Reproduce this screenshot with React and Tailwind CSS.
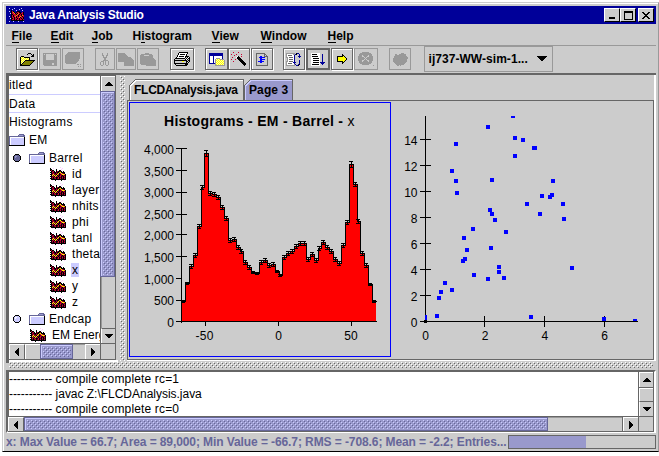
import React from 'react';
import clsx from 'clsx';

const PALETTE = {
  K: '#000000',
  W: '#ffffff',
  G: '#999999',
  L: '#cccccc',
  D: '#666666',
  Y: '#ffff00',
  y: '#ffffaa',
  O: '#808000',
  B: '#0000ff',
  N: '#000099',
  R: '#cc0033',
  M: '#660022',
  P: '#ffccff',
  V: '#ccccff',
  S: '#666699',
  C: '#9999cc',
  o: '#ff9900',
};

// Small bitmap icons, one character per pixel
const ICONS = {
  histogram: [
    '..........P.....',
    'K..P........P...',
    'KK....K....P....',
    'KRKK..K..KK.....',
    '.KMRK.KRKKMK.K..',
    'KKRMKKMKKoYKKKK.',
    '.KMRMKRMYKRYRMK.',
    'KKRYMRKYRKMRYYoK',
    '.KYMYMYKMKRMKRMK',
    'KKMRKYMRKMRKMKRK',
    '.KRKRMKKRKMKRKMK',
    'KKMKMRKMRKRKMKRK',
    '.KKKKKKKKKKKKKKK',
    '..P..K..P..K..P.',
  ],
  app: [
    'V....V......V...',
    '...V......V.....',
    '..K....V.....V..',
    'V.KRK...KKK.....',
    '..KRoK.KRRKK.RK.',
    '.VKRRoKRKoRKRRK.',
    '..KKRRRKoRKRKRK.',
    '..KRKRRoRKRRKoR.',
    'V.KRKRoKRKRoRKR.',
    '..KRRKRKRRoKRRK.',
    '.VKKRKRRKRKRKRK.',
    '..KRRKRKRRKRRKR.',
    '..KKKKKKKKKKKKK.',
    'V...V....V....V.',
  ],
  folder: [
    '..........SSSSS.',
    '.........SCCCCSS',
    'SSSSSSSSSSSSSSSS',
    'SWWWWWWWWWWWWWWK',
    'SWVVVVVVVVVVVVVK',
    'SWVVVVVVVVVVVVVK',
    'SWVVVVVVVVVVVVVK',
    'SWVVVVVVVVVVVVVK',
    'SWVVVVVVVVVVVVVK',
    'SWVVVVVVVVVVVVVK',
    'SWVVVVVVVVVVVVVK',
    'KKKKKKKKKKKKKKKK',
  ],
  knobOpen: [
    '..KKKK..',
    '.KSSSSK.',
    'KSCCSSSK',
    'KSCSSSSK',
    'KSSSSSSK',
    'KSSSSSSK',
    '.KSSSSK.',
    '..KKKK..',
  ],
  knobClosed: [
    '..KKKK..',
    '.KVVVVK.',
    'KVWWVVVK',
    'KVWVVVVK',
    'KVVVVVVK',
    'KVVVVVVK',
    '.KVVVVK.',
    '..KKKK..',
  ],
  open: [
    '.........KKK....',
    '........K...K.K.',
    '.............KK.',
    '..KKK.......KKK.',
    '.KyYyKKKKKK.....',
    '.KYyYyYyYyK.....',
    '.KyYyYyYyYK.....',
    '.KYyYyKKKKKKKKKK',
    '.KyYyKOOOOOOOOK.',
    '.KYyKOOOOOOOOK..',
    '.KyKOOOOOOOOK...',
    '.KKOOOOOOOOK....',
    '.KKKKKKKKKK.....',
  ],
  save: [
    'GGGGGGGGGGGGGG',
    'GLGLLLLLLLLGLG',
    'GGGLLLLLLLLGGG',
    'GGGLLLLLLLLGGG',
    'GGGLLLLLLLLGGG',
    'GGGLLLLLLLLGGG',
    'GGGLLLLLLLLGGG',
    'GGGGGGGGGGGGGG',
    'GGGGGGGGGGGGGG',
    'GGGGGGGGGGGGGG',
    'GGGGGGGGGLLGGG',
    'GGGGGGGGGLLGGG',
    '.GGGGGGGGGGGGG',
  ],
  saveAll: [
    '...GGGGGGGGGGGG.',
    '..GGGGGGGGGGGGG.',
    '.GGGGGGGGGGGGGG.',
    'GGGGGGGGGGGGGGG.',
    'GGGGGGGGGGGGGGG.',
    'GGGGGGGGGGGGGGG.',
    'GGGGGGGGGGGGGGG.',
    'GGGGGGGGGGGGGG..',
    'GGGGGGGGGGGGGG..',
    'GGGGGGGGGGGGG...',
    'GGGGGGGGGGGG....',
    '.GGGGGGGGGG.....',
    '............GG.G',
    '................',
    '.............G.G',
  ],
  cut: [
    '..G....G..',
    '..G....G..',
    '..GG..GG..',
    '...G..G...',
    '...GGGG...',
    '....GG....',
    '....GG....',
    '...GGGGG..',
    '.GGG.G..G.',
    'G..G.G..G.',
    'G..G.G..G.',
    'G..G.G..G.',
    '.GG...GG..',
  ],
  copy: [
    'GGGGGGG.........',
    'GGGGGGGG........',
    'GGGGGGGGG.......',
    'GGGGGGGGGG......',
    'GGGGGGGGGGGGG...',
    'GGGGGGGGGGGGGG..',
    'GGGGGGGGGGGGGGG.',
    'GGGGGGGGGGGGGGGG',
    'GGGGGGGGGGGGGGGG',
    '......GGGGGGGGGG',
    '......GGGGGGGGGG',
    '......GGGGGGGGGG',
    '......GGGGGGGGGG',
  ],
  paste: [
    '.....GGGG.......',
    '.GGGGGGGGGGG....',
    'GGGGLLLLLGGGG...',
    'GGGGGGGGGGGGG...',
    'GGGGGGGGGGGGG...',
    'GGGGGGGGGGGGGG..',
    'GGGGGGGGGGGGGGG.',
    'GGGGGGGGGGGGGGGG',
    'GGGGGGGGGGGGGGGG',
    'GGGGGGGGGGGGGGGG',
    'GGGGGGGGGGGGGGGG',
    '.GGGGGGGGGGGGGGG',
    '......GGGGGGGGGG',
  ],
  print: [
    '.....KKKKKKKKK..',
    '....KWWWWWWWWK..',
    '....KWKKKKKWK...',
    '...KWWWWWWWWK...',
    '...KWKKKKKWKKKK.',
    '..KWWWWWWWWK.KWK',
    '.KKKKKKKKKK.KWKK',
    'KLLLLLLLLLLKWKLK',
    'KKKKKKKKKKKKKLKK',
    'KLLLLLLLYYLLKKLK',
    'KLLLLLLLLLLLKLK.',
    'KKKKKKKKKKKKKK..',
    '.KLLLLLLLLLKKK..',
    '..KKKKKKKKKKK...',
  ],
  page: [
    'NNNNNNNNNNNNNN..',
    'NNNNNNNNNNNNNN..',
    'NNNNNNNNNNNNNN..',
    'NWWWNWWWWWWWWN..',
    'NWWWNWWWWWWWWN..',
    'NWWWNWWGGGGWWN..',
    'NWWWNWGyYyYGGGG.',
    'NWWWNWGYyYyYyYyG',
    'NWWWNWGyYyYyYyYG',
    'NWWWNWGYyYyYyYyG',
    'NNNNNNGyYyYyYyYG',
    '......GYyYyYyYyG',
    '......GGGGGGGGGG',
  ],
  wand: [
    '..R....R........',
    '................',
    'R....R....R.....',
    '...R............',
    '......WK..R.....',
    '.R...WKKK.......',
    '......KKKK......',
    'R...R..KKKK.....',
    '........KKKK....',
    '..R......KKKK...',
    '..........KKKK..',
    '...........KKKK.',
    '............KKK.',
    '.............K..',
  ],
  doc: [
    'DDDDDDDDD...',
    'DLLLLLLLDD..',
    'DLLLLLLLDLD.',
    'DLLLBBLLDDDD',
    'DLLBBBBBBLLD',
    'DLLLBBLLLLLD',
    'DLLLBBBBBLLD',
    'DLLLBBLLLLLD',
    'DLBBBBBBLLLD',
    'DLLLBBLLLLLD',
    'DLLLLLLLLLLD',
    'DLLLLLLLLLLD',
    'DDDDDDDDDDDD',
  ],
  reload: [
    'GGGGGGGGG.KNN...',
    'GWWWWWWGGNK..N..',
    'GWDDDDWWN....N..',
    'GWWWWWWWN...NNN.',
    'GGWDDDDWN....N..',
    '.GWWWWWWN.......',
    '.GWDDDDWN.......',
    '.GWWWWWWN....N..',
    'GGWDDDDWN....N..',
    'GWWWWWWNNN...N..',
    'GWDDDDWWN....N..',
    'GWWWWWWWGN..NK..',
    'GGGGGGGGG.NNK...',
  ],
  run: [
    'WWWWWWWWW.....',
    'WKKKKKWWW..N..',
    'WWWWWWWWW..N..',
    'WKKKKKKWW..N..',
    'WWWWWWWWW..N..',
    'WWKKKKKKW..N..',
    'WWWWWWWWW..N..',
    'WWKKKKKKW..N..',
    'WWWWWWWWW..N..',
    'WWKKKKKKWNNNNN',
    'WWWWWWWWW.NNN.',
    'WKKKKKKKW..N..',
    'WWWWWWWWW.....',
  ],
  step: [
    '.....K....',
    '.....KK...',
    'KKKKKKYK..',
    'KYYYYYYYK.',
    'KYYYYYYYYK',
    'KYYYYYYYYK',
    'KYYYYYYYK.',
    'KKKKKKYK..',
    '.....KK...',
    '.....K....',
  ],
  stop: [
    '....GGGGGGG.....',
    '..GGGGGGGGGGG...',
    '.GGGGGGGGGGGGG..',
    '.GGGLGGGGGLGGG..',
    'GGGGLLGGGLLGGGG.',
    'GGGGGGLGLGGGGGG.',
    'GGGGGGGLGGGGGGG.',
    'GGGGGGLGLGGGGGG.',
    'GGGGLLGGGLLGGGG.',
    '.GGGLGGGGGLGGG..',
    '.GGGGGGGGGGGGG..',
    '..GGGGGGGGGGG...',
    '....GGGGGGG.....',
    '...............G',
  ],
  blob: [
    '........GGG....',
    '..GG..GGGGGGG..',
    '..GGGGGGGGGGG..',
    '.GGGGGGGGGGGGG.',
    '.GGGGGGGGGGGGGG',
    'GGGGGGGGGGGGGGG',
    'GGGGGGGGGGGGGG.',
    'GGGGGGGGGGGGGG.',
    'GGGGGGGGGGGGGG.',
    '.GGGGGGGGGGGG..',
    '..GGGGGGGGGG...',
    '...GGGGGGGG....',
    '....GG.G.......',
  ],
  up: ['...KK...', '..KKKK..', '.KKKKKK.', 'KKKKKKKK'],
  down: ['KKKKKKKK', '.KKKKKK.', '..KKKK..', '...KK...'],
  left: ['...K', '..KK', '.KKK', 'KKKK', 'KKKK', '.KKK', '..KK', '...K'],
  right: ['K...', 'KK..', 'KKK.', 'KKKK', 'KKKK', 'KKK.', 'KK..', 'K...'],
  combo: ['KKKKKKKKKK', '.KKKKKKKK.', '..KKKKKK..', '...KKKK...', '....KK....'],
  minimize: ['KKKKKK', 'KKKKKK'],
  maximize: [
    'KKKKKKKKK',
    'KKKKKKKKK',
    'K.......K',
    'K.......K',
    'K.......K',
    'K.......K',
    'K.......K',
    'K.......K',
    'KKKKKKKKK',
  ],
  close: ['KK....KK', '.KK..KK.', '..KKKK..', '...KK...', '..KKKK..', '.KK..KK.', 'KK....KK'],
};

const PixelIcon = ({ name, className }) => {
  const rows = ICONS[name];
  return (
    <svg
      width={rows[0].length}
      height={rows.length}
      shapeRendering="crispEdges"
      className={clsx('shrink-0', className)}
    >
      {rows.map((row, y) =>
        [...row].map((c, x) =>
          PALETTE[c] ? <rect key={`${x}-${y}`} x={x} y={y} width="1" height="1" fill={PALETTE[c]} /> : null
        )
      )}
    </svg>
  );
};

/* Metal look "bumps" texture */
const Bumps = ({ id, light = '#ffffff', dark = '#666666' }) => (
  <svg width="100%" height="100%" shapeRendering="crispEdges" className="block">
    <pattern id={id} width="4" height="4" patternUnits="userSpaceOnUse">
      <rect x="0" y="0" width="1" height="1" fill={light} />
      <rect x="1" y="1" width="1" height="1" fill={dark} />
      <rect x="2" y="2" width="1" height="1" fill={light} />
      <rect x="3" y="3" width="1" height="1" fill={dark} />
    </pattern>
    <rect width="100%" height="100%" fill={`url(#${id})`} />
  </svg>
);

const Thumb = ({ id, className }) => (
  <div className={clsx('bg-[#9999cc] border border-[#666699] shrink-0', className)}>
    <div className="h-full border-l border-t border-[#ccccff] p-px">
      <Bumps id={id} light="#ccccff" dark="#666699" />
    </div>
  </div>
);

const ArrowButton = ({ name, className }) => (
  <div
    className={clsx(
      'flex items-center justify-center shrink-0 bg-[#cccccc] border-l border-t border-white',
      className
    )}
  >
    <PixelIcon name={name} />
  </div>
);

const WindowButton = ({ name, className, align = 'items-center' }) => (
  <div
    className={clsx(
      'w-4 h-[14px] flex justify-center bg-[#cccccc] border-l border-t border-l-white border-t-white border-r border-b border-r-black border-b-black',
      align,
      className
    )}
  >
    <PixelIcon name={name} />
  </div>
);

const TitleBar = () => (
  <div className="h-[18px] bg-[#000099] flex items-center pl-[3px] pr-[2px]">
    <PixelIcon name="app" />
    <span className="ml-1 text-white font-bold text-[12px] leading-[18px] tracking-[-0.25px]">
      Java Analysis Studio
    </span>
    <div className="ml-auto flex">
      <WindowButton name="minimize" align="items-end pb-[2px]" />
      <WindowButton name="maximize" />
      <WindowButton name="close" className="ml-[2px]" />
    </div>
  </div>
);

const MENUS = [
  { key: 'F', rest: 'ile', width: 'w-[39px]' },
  { key: 'E', rest: 'dit', width: 'w-[41px]' },
  { key: 'J', rest: 'ob', width: 'w-[41px]' },
  { pre: 'H', key: 'i', rest: 'stogram', width: 'w-[79px]' },
  { key: 'V', rest: 'iew', width: 'w-[49px]' },
  { key: 'W', rest: 'indow', width: 'w-[67px]' },
  { key: 'H', rest: 'elp', width: 'w-[40px]' },
];

const MenuBar = () => (
  <div className="h-[22px] flex pl-[5.5px] border-b border-[#999999] font-bold text-[12px] leading-[24px]">
    {MENUS.map((m) => (
      <div key={m.key + m.rest} className={clsx('shrink-0', m.width)}>
        {m.pre}
        <span className="inline-block h-[19px] leading-[24px] border-b border-black align-top">{m.key}</span>
        {m.rest}
      </div>
    ))}
  </div>
);

const TOOLS = [
  { icon: 'open', box: 'w-[22px] ml-[10px]' },
  { icon: 'save', box: 'w-[22px] ml-px', disabled: true },
  { icon: 'saveAll', box: 'w-[22px] ml-px', disabled: true },
  { icon: 'cut', box: 'w-[20px] ml-[11px]', disabled: true },
  { icon: 'copy', box: 'w-[20px] ml-px', disabled: true },
  { icon: 'paste', box: 'w-[22px] ml-px', disabled: true },
  { icon: 'print', box: 'w-[24px] ml-[11px]' },
  { icon: 'page', box: 'w-[23px] ml-[11px]' },
  { icon: 'wand', box: 'w-[22px]' },
  { icon: 'doc', box: 'w-[22px] ml-px' },
  { icon: 'reload', box: 'w-[22px] ml-[10px]' },
  { icon: 'run', box: 'w-[24px] ml-px', pressed: true },
  { icon: 'step', box: 'w-[22px] ml-px' },
  { icon: 'stop', box: 'w-[24px] ml-px', disabled: true },
  { icon: 'blob', box: 'w-[22px] ml-[11px]', disabled: true },
];

const ToolBar = () => (
  <div className="h-[27px] flex items-start">
    {TOOLS.map(({ icon, box, disabled, pressed }) => (
      <div key={icon} className={clsx('shrink-0 h-[22px] mt-[2px]', box)}>
        <div
          className={clsx(
            'h-full flex items-center justify-center overflow-hidden border',
            disabled && 'border-[#999999]',
            pressed && 'border-2 border-[#666666]',
            !disabled && !pressed && 'border-[#666666] shadow-[inset_1px_1px_0_#fff,1px_1px_0_#fff]'
          )}
        >
          <PixelIcon name={icon} />
        </div>
      </div>
    ))}
    <div className="ml-[12.5px] w-[129px] h-[26px] border border-[#999999] flex items-center pl-[4px] pr-[5px] font-bold text-[12px]">
      <span className="tracking-[0.05px]">ij737-WW-sim-1...</span>
      <PixelIcon name="combo" className="ml-auto -mt-[2px]" />
    </div>
  </div>
);

const LEAVES = ['id', 'layer', 'nhits', 'phi', 'tanl', 'theta', 'x', 'y', 'z'];

const Tree = () => (
  <div className="w-[91px] h-[267px] bg-white overflow-hidden text-[12px] whitespace-nowrap tracking-[0.3px]">
    <div className="h-[19px] leading-[19px] border-b border-[#ccccff]">itled</div>
    <div className="h-[18px] leading-[18px] border-b border-[#ccccff]">Data</div>
    <div className="h-[18px] leading-[18px]">Histograms</div>
    <div className="h-[18px] flex items-center">
      <PixelIcon name="folder" />
      <span className="ml-1">EM</span>
    </div>
    <div className="h-[17px] flex items-center pl-[4px]">
      <PixelIcon name="knobOpen" />
      <PixelIcon name="folder" className="ml-2" />
      <span className="ml-1">Barrel</span>
    </div>
    {LEAVES.map((leaf) => (
      <div key={leaf} className="h-4 flex items-center pl-[41px]">
        <PixelIcon name="histogram" />
        <span className={clsx('ml-[5px] px-px h-[14px] leading-[15px]', leaf === 'x' && 'bg-[#ccccff]')}>{leaf}</span>
      </div>
    ))}
    <div className="h-[17px] flex items-center pl-[4px]">
      <PixelIcon name="knobClosed" />
      <PixelIcon name="folder" className="ml-2" />
      <span className="ml-1">Endcap</span>
    </div>
    <div className="h-4 flex items-center pl-[21px]">
      <PixelIcon name="histogram" />
      <span className="ml-[6px] tracking-normal">EM Energy</span>
    </div>
  </div>
);

const TreePane = () => (
  <div className="w-[112px] h-[288px] shrink-0 border-l-[3px] border-[#666666]">
    <div className="border-t border-[#666666] h-[285px] w-[107px] border-r border-b">
      <div className="flex h-[267px]">
        <Tree />
        <div className="w-[15px] border-l border-[#666666] flex flex-col">
          <ArrowButton name="up" className="h-[15px]" />
          <Thumb id="tv" className="h-[186px] -ml-px" />
          <div className="flex-1 border-l border-[#999999]" />
          <ArrowButton name="down" className="h-[15px] border-t-[#666666]" />
        </div>
      </div>
      <div className="h-4 border-t border-[#666666] flex">
        <ArrowButton name="left" className="w-4 border-r border-r-[#666666]" />
        <div className="w-[15px] border-t border-l border-white" />
        <Thumb id="th" className="w-[33px]" />
        <div className="flex-1 border-t border-[#999999]" />
        <ArrowButton name="right" className="w-[15px] border-l-white" />
        <div className="w-[15px] border-l border-[#666666]" />
      </div>
    </div>
    <div className="h-[2px] bg-white" />
  </div>
);

// Bin tops of the histogram, in plot pixels
const BINS = [
  301.3, 283.3, 265.7, 255.3, 226, 187, 153, 193, 194.3, 197.3, 206.7, 217.7, 240, 238.7, 246.5, 250.7, 261.7,
  267, 271.7, 272.7, 262, 260.3, 265, 263.5, 270.5, 274.7, 256.5, 253.3, 251, 245.7, 242.5, 243.3, 258.7, 254,
  260, 248.3, 241.7, 247, 251, 259.3, 263, 245.3, 222, 163.7, 183.7, 221, 253.3, 265, 283.7, 301.3,
];

const HistogramPlot = () => {
  const x0 = 181;
  const step = 3.9;
  const outline = BINS.map((y, i) => `L${Math.round(x0 + i * step)} ${Math.round(y)}H${Math.round(x0 + (i + 1) * step)}`).join('');
  return (
    <svg width="260" height="253" viewBox="130 103 260 253" className="block text-[12px]">
      <text x="164" y="126" fontSize="14" fontWeight="bold" textLength="179" lengthAdjust="spacing">
        Histograms - EM - Barrel -
      </text>
      <text x="347.5" y="126" fontSize="14">x</text>
      <g shapeRendering="crispEdges">
        <path d={`M181 321${outline}V321Z`} fill="#ff0000" />
        <path d={`M181.5 321${outline}`} fill="none" stroke="#000" transform="translate(0.5 0.5)" />
        {BINS.map((y, i) => {
          const cx = Math.round(x0 + (i + 0.5) * step);
          const err = Math.max(1, Math.round(Math.sqrt((321.5 - y) / 0.04325) * 0.04325));
          const t = Math.round(y);
          return (
            <path
              key={i}
              d={`M${cx - 2} ${t - err + 0.5}h4M${cx - 2} ${t + err + 0.5}h4M${cx + 0.5} ${t - err}v${err * 2 + 1}`}
              stroke="#000"
            />
          );
        })}
        <path d="M181.5 148V323M180 321.5H377" stroke="#000" fill="none" />
        {[148, 170, 192, 214, 234, 256, 278, 300, 321].map((y) => (
          <path key={y} d={`M176 ${y + 0.5}H${y > 256 ? 181 : 187}`} stroke="#000" />
        ))}
        {[205, 278, 351].map((x) => (
          <path key={x} d={`M${x + 0.5} 321v5`} stroke="#000" />
        ))}
      </g>
      {['4,000', '3,500', '3,000', '2,500', '2,000', '1,500', '1,000', '500', '0'].map((label, i) => (
        <text key={label} x="174" y={154 + i * 21.6} textAnchor="end">{label}</text>
      ))}
      <text x="204.5" y="340" textAnchor="middle" letterSpacing="0.3">-50</text>
      <text x="278.5" y="340" textAnchor="middle">0</text>
      <text x="351" y="340" textAnchor="middle">50</text>
    </svg>
  );
};

const POINTS = [
  [486, 125], [513, 136], [521, 138], [532, 146], [533, 146], [513, 154], [454, 142], [450, 169], [454, 179],
  [455, 191], [490, 178], [551, 179], [540, 194], [548, 195], [550, 193], [525, 202], [561, 202], [488, 208],
  [490, 212], [538, 212], [493, 218], [562, 217], [471, 227], [504, 230], [462, 236], [465, 248], [463, 257],
  [461, 259], [489, 246], [497, 265], [497, 270], [502, 276], [486, 277], [472, 273], [443, 281], [450, 288],
  [439, 290], [437, 296], [435, 314], [529, 315], [602, 317], [570, 266],
];

const ScatterPlot = () => (
  <svg width="260" height="257" viewBox="391 101 260 257" className="block text-[12px]">
    <g shapeRendering="crispEdges">
      <path d="M425.5 116V323M420 321.5H638" stroke="#000" />
      {[139, 165, 191, 217, 243, 269, 295].map((y) => (
        <path key={y} d={`M420 ${y + 0.5}h11`} stroke="#000" />
      ))}
      {[484, 544, 604].map((x) => (
        <path key={x} d={`M${x + 0.5} 316v11`} stroke="#000" />
      ))}
      <g fill="#0000ff">
        {POINTS.map(([x, y], i) => (
          <rect key={i} x={x} y={y} width="4" height="4" />
        ))}
        <rect x="511" y="116" width="4" height="2" />
        <rect x="425" y="315" width="2" height="5" />
        <rect x="633" y="319" width="4" height="2" />
      </g>
      <rect x="424" y="320" width="3" height="3" />
    </g>
    {['14', '12', '10', '8', '6', '4', '2', '0'].map((label, i) => (
      <text key={label} x="417.5" y={145 + i * 26} textAnchor="end">{label}</text>
    ))}
    {['0', '2', '4', '6'].map((label, i) => (
      <text key={label} x={425.5 + i * 59.7} y="340" textAnchor="middle">{label}</text>
    ))}
  </svg>
);

const Tab = ({ label, active, className }) => (
  <div className={clsx('relative h-[21px] shrink-0', className)}>
    <svg width="100%" height="21" shapeRendering="crispEdges" className="absolute inset-0">
      <path d="M0 21V6L6 0H200V21Z" fill={active ? '#cccccc' : '#9999cc'} />
      <path d="M0.5 21V6.5L6.5 0.5H200" fill="none" stroke="#666666" />
      <path d="M1.5 21V7L7 1.5H200" fill="none" stroke={active ? '#ffffff' : '#ccccff'} />
    </svg>
    <div className="relative h-full border-r border-[#666666] pl-[5px] text-[12px] leading-[22px] font-bold whitespace-nowrap">
      {label}
    </div>
  </div>
);

const PlotPane = () => (
  <div className="flex-1 flex flex-col">
    <div className="flex h-[25px] items-end pl-[2px]">
      <Tab label="FLCDAnalysis.java" active className="w-[115px] tracking-[-0.25px]" />
      <Tab label="Page 3" className="w-[49px] tracking-[0.1px]" />
    </div>
    <div className="h-[260px] w-[527px] border border-[#666666] flex">
      <div className="mt-px ml-px w-[262px] h-[255px] border border-[#0000ff] shrink-0">
        <HistogramPlot />
      </div>
      <ScatterPlot />
    </div>
    <div className="h-px bg-white" />
  </div>
);

const LOG = [
  { text: 'compile complete rc=1', tracking: 'tracking-[0.15px]' },
  { text: 'javac Z:\\FLCDAnalysis.java', tracking: 'tracking-[-0.02px]' },
  { text: 'compile complete rc=0', tracking: 'tracking-[0.15px]' },
];

const Console = () => (
  <div className="h-[63px] border-l-2 border-t-2 border-[#666666] border-b-2 border-b-white border-r-2 border-r-white">
    <div className="border-r border-b border-[#666666] h-[60px]">
      <div className="flex h-[44px]">
        <div className="w-[630px] h-full bg-white border-l border-l-[#666666] overflow-hidden text-[12px]">
          {LOG.map(({ text, tracking }) => (
            <div key={text} className="h-[15px] leading-[14px] whitespace-pre">
              <span className="tracking-[-0.06px]">----------- </span>
              <span className={tracking}>{text}</span>
            </div>
          ))}
        </div>
        <div className="flex-1 border-l border-[#666666] flex flex-col">
          <ArrowButton name="up" className="h-[15px]" />
          <div className="h-[14px] border-t border-[#666666] shadow-[inset_1px_1px_0_#fff]" />
          <ArrowButton name="down" className="h-[15px] border-t-[#666666]" />
        </div>
      </div>
      <div className="h-[15px] border-t border-[#666666] flex">
        <ArrowButton name="left" className="w-4 border-r border-r-[#666666]" />
        <Thumb id="ch" className="w-[524px]" />
        <div className="flex-1 border-t border-[#999999]" />
        <ArrowButton name="right" className="w-[15px] shadow-[-1px_0_0_#666666]" />
        <div className="w-[15px] border-l border-[#666666]" />
      </div>
    </div>
  </div>
);

const StatusBar = () => (
  <div className="h-[17px] flex items-center">
    <span className="w-[502px] text-[12px] font-bold text-[#666699] whitespace-nowrap tracking-[-0.09px]">
      x: Max Value = 66.7; Area = 89,000; Min Value = -66.7; RMS = -708.6; Mean = -2.2; Entries...
    </span>
    <div className="w-[148px] h-[14px] border border-[#666666]">
      <div className="h-full w-[77px] bg-[#9999cc]" />
    </div>
  </div>
);

const App = () => (
  <div className="w-[659px] h-[456px] bg-white overflow-hidden pl-[2px] pt-[2px] text-black font-['Liberation_Sans',Arial,sans-serif]">
    <div className="w-[657px] h-[450px] border-l border-t border-l-[#cccccc] border-t-[#cccccc] border-r border-r-[#999999] border-b border-b-black">
      <div className="h-full bg-[#cccccc] border-l border-t border-white pl-[2px] pt-[2px] pr-[2px]">
        <TitleBar />
        <MenuBar />
        <ToolBar />
        <div className="h-[2px] bg-[#666666]" />
        <div className="h-[286px] flex border-r-2 border-white">
          <TreePane />
          <div className="w-[9px] shrink-0 px-[2px] pt-px h-[286px]">
            <Bumps id="dv" />
          </div>
          <PlotPane />
        </div>
        <div className="h-[9px] pt-px pb-[2px] px-[3px]">
          <Bumps id="dh" />
        </div>
        <Console />
        <StatusBar />
      </div>
    </div>
  </div>
);

export default App;
